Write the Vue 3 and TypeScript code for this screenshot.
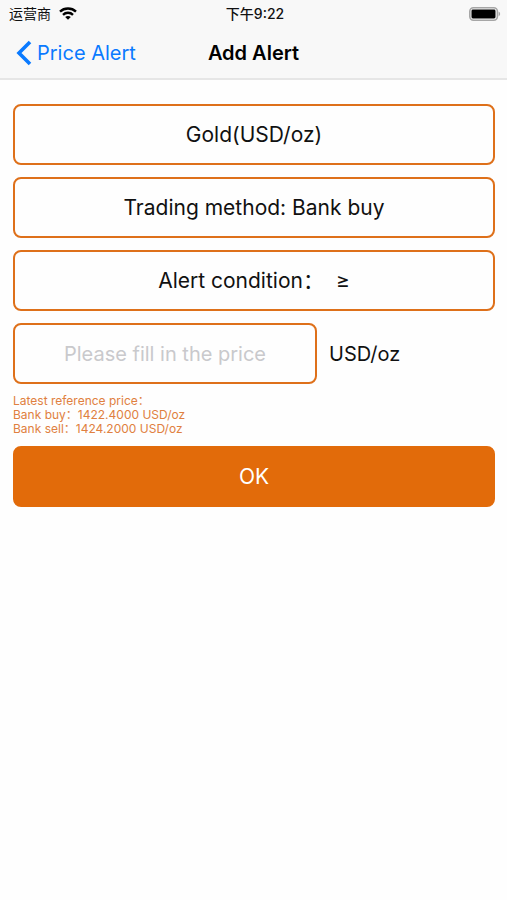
<script setup lang="ts">
import { ref } from 'vue'

interface Quote {
  label: string
  value: string
}

const unit = 'USD/oz'
const price = ref('')
const quotes: Quote[] = [
  { label: 'Bank buy', value: '1422.4000' },
  { label: 'Bank sell', value: '1424.2000' },
]
</script>

<template>
  <div class="screen">
    <header class="top">
      <div class="status">
        <div class="carrier">
          <span>运营商</span>
          <svg class="wifi" viewBox="0 0 18 13" aria-hidden="true">
            <path d="M1 4.6C5.4.4 12.6.4 17 4.6" />
            <path d="M4 7.8c2.8-2.7 7.2-2.7 10 0" />
            <path class="dot" d="M9 12.8 6.2 10c1.5-1.5 4.1-1.5 5.6 0z" />
          </svg>
        </div>
        <time class="clock">下午9:22</time>
        <svg class="battery" viewBox="0 0 32 14" aria-hidden="true">
          <rect class="shell" x="0.8" y="0.8" width="27.6" height="12.4" rx="3.6" />
          <rect x="2.5" y="2.5" width="24" height="9" rx="1.4" />
          <path class="tip" d="M29.6 4.8c2 .6 2 3.8 0 4.4z" />
        </svg>
      </div>
      <nav class="bar">
        <a class="back" href="#">
          <svg viewBox="0 0 16 26" aria-hidden="true"><path d="M14 2 3 13l11 11" /></svg>
          <span>Price Alert</span>
        </a>
        <h1>Add Alert</h1>
      </nav>
    </header>

    <form class="form" @submit.prevent>
      <div class="fields">
        <button type="button" class="field">Gold({{ unit }})</button>
        <button type="button" class="field">Trading method: Bank buy</button>
        <button type="button" class="field condition"><span>Alert condition：</span><span>≥</span></button>
        <div class="price">
          <input
            id="price"
            v-model="price"
            class="field"
            type="text"
            inputmode="decimal"
            placeholder="Please fill in the price"
          />
          <label for="price">{{ unit }}</label>
        </div>
      </div>
      <div class="quotes">
        <p>Latest reference price：</p>
        <p v-for="q in quotes" :key="q.label">{{ q.label }}：{{ q.value }} {{ unit }}</p>
      </div>
      <button type="submit" class="submit">OK</button>
    </form>
  </div>
</template>

<style>
body {
  background: #fefefe;
}
</style>

<style scoped>
.screen {
  min-height: 100vh;
  color: #111;
  font-family: Inter, "Noto Sans CJK SC", sans-serif;
}

.top {
  background: #f8f8f8;
  border-bottom: 2px solid #e6e6e6;
}

.status {
  display: grid;
  grid-template-columns: 1fr auto 1fr;
  align-items: center;
  height: 27px;
  padding: 0 6px 0 9px;
  font-size: 14px;
  line-height: 27px;
}

.carrier {
  display: flex;
  align-items: center;
  gap: 8px;
}

.wifi {
  width: 18px;
  height: 13px;
  fill: none;
  stroke: #000;
  stroke-width: 2.4;
}

.wifi .dot {
  fill: #000;
  stroke: none;
}

.clock {
  font-weight: 500;
}

.battery {
  justify-self: end;
  width: 32px;
  height: 14px;
}

.battery .shell {
  fill: none;
  stroke: #a6a6a6;
  stroke-width: 1.6;
}

.battery .tip {
  fill: #a6a6a6;
}

.bar {
  display: grid;
  grid-template-columns: 1fr auto 1fr;
  align-items: center;
  height: 51px;
  padding: 0 16px;
}

.back {
  display: flex;
  align-items: center;
  gap: 5px;
  color: #0a7aff;
  font-size: 20px;
  text-decoration: none;
}

.back svg {
  width: 16px;
  height: 26px;
  fill: none;
  stroke: currentColor;
  stroke-width: 3.6;
}

h1 {
  margin: 0;
  color: #000;
  font-size: 20px;
  font-weight: 600;
}

.form {
  display: flex;
  flex-direction: column;
  gap: 10px;
  padding: 24px 12px 24px 13px;
}

.fields {
  display: flex;
  flex-direction: column;
  gap: 12px;
}

.field,
.submit {
  box-sizing: border-box;
  width: 100%;
  height: 61px;
  padding: 0 12px;
  border: 2px solid #de701a;
  border-radius: 8px;
  background: transparent;
  color: inherit;
  font-family: inherit;
  font-size: 21px;
  line-height: 26px;
  text-align: center;
}

.condition {
  display: flex;
  align-items: center;
  justify-content: center;
  gap: 12px;
}

.price {
  display: flex;
  align-items: center;
  gap: 12px;
  font-size: 20px;
}

.price .field {
  flex: 1;
  min-width: 0;
  font-size: 20px;
}

.price .field::placeholder {
  color: #c9c9cc;
  opacity: 1;
}

.price label {
  flex: 0 0 166px;
}

.quotes {
  color: #e08040;
  font-size: 12px;
  line-height: 14px;
}

.quotes p {
  margin: 0;
}

.submit {
  border-color: #e26b0a;
  background: #e26b0a;
  color: #fff;
}
</style>
